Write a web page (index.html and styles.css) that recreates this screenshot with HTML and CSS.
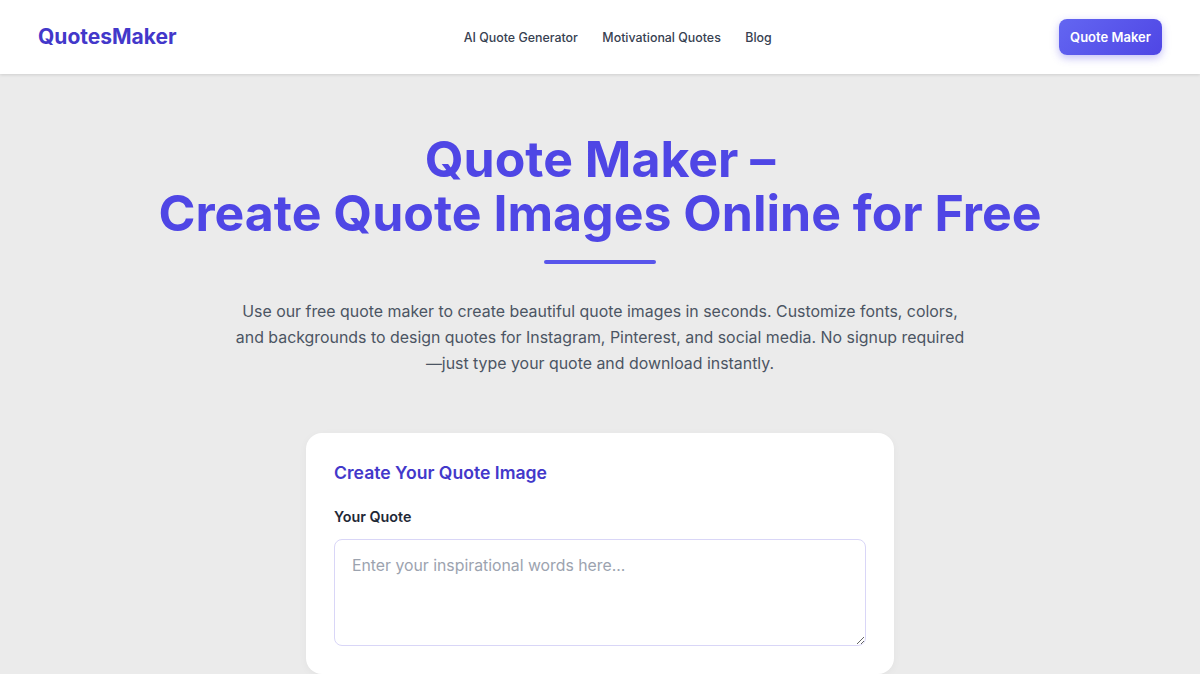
FILE: index.html
```html
<!DOCTYPE html>
<html lang="en">
<head>
<meta charset="utf-8">
<title>Quote Maker</title>
<link rel="stylesheet" href="styles.css">
</head>
<body>
<header class="site-header">
  <a class="logo" href="#">QuotesMaker</a>
  <nav class="nav">
    <a href="#">AI Quote Generator</a>
    <a href="#">Motivational Quotes</a>
    <a href="#">Blog</a>
  </nav>
  <a class="cta" href="#">Quote Maker</a>
</header>
<main class="main">
  <section class="hero">
    <h1 class="title">Quote Maker –<br>Create Quote Images Online for Free</h1>
    <div class="divider"></div>
    <p class="intro">Use our free quote maker to create beautiful quote images in seconds. Customize fonts, colors, and backgrounds to design quotes for Instagram, Pinterest, and social media. No signup required—just type your quote and download instantly.</p>
  </section>
  <section class="card">
    <h2 class="card-title">Create Your Quote Image</h2>
    <label class="label" for="q">Your Quote</label>
    <textarea id="q" class="input" placeholder="Enter your inspirational words here..."></textarea>
  </section>
</main>
</body>
</html>
```
FILE: styles.css
```css
* { box-sizing: border-box; }
html, body { margin: 0; padding: 0; }
body {
  font-family: Inter, "Noto Sans", "DejaVu Sans", sans-serif;
  background: #ebebeb;
  color: #1f2937;
  overflow: hidden;
}
a { text-decoration: none; }
.site-header {
  height: 74px;
  background: #ffffff;
  display: flex;
  align-items: center;
  justify-content: space-between;
  padding: 0 38px;
  box-shadow: 0 1px 3px rgba(0,0,0,0.12);
  position: relative;
  z-index: 1;
}
.logo {
  font-size: 21px;
  line-height: 24px;
  margin-top: -1px;
  font-weight: 700;
  color: #4338ca;
}
.nav {
  display: flex;
  gap: 24.5px;
}
.nav a {
  font-size: 12.4px;
  font-weight: 500;
  color: #374151;
}
.cta {
  width: 103px;
  height: 36px;
  display: flex;
  align-items: center;
  justify-content: center;
  border-radius: 8px;
  background: linear-gradient(135deg, #6366f1, #4f46e5);
  color: #ffffff;
  font-size: 13px;
  font-weight: 600;
  box-shadow: 0 3px 8px rgba(79,70,229,0.35);
}
.main {
  display: flex;
  flex-direction: column;
  align-items: center;
  padding-top: 58px;
}
.hero {
  display: flex;
  flex-direction: column;
  align-items: center;
  text-align: center;
}
.title {
  margin: 0;
  font-size: 50px;
  line-height: 54px;
  font-weight: 700;
  color: #4f46e5;
}
.divider {
  width: 112px;
  height: 3.5px;
  background: #5855eb;
  border-radius: 2px;
  margin-top: 20px;
}
.intro {
  margin: 35px 0 0;
  max-width: 738px;
  font-size: 15.9px;
  line-height: 26px;
  color: #4b5563;
}
.card {
  margin-top: 56px;
  width: 588px;
  background: #ffffff;
  border-radius: 16px;
  padding: 28px 28px 28px;
  display: flex;
  flex-direction: column;
  box-shadow: 0 2px 8px rgba(0,0,0,0.04);
}
.card-title {
  margin: 0;
  font-size: 17.6px;
  font-weight: 600;
  color: #4338ca;
  line-height: 24px;
}
.label {
  margin-top: 23px;
  font-size: 14.3px;
  line-height: 18px;
  font-weight: 600;
  color: #1f2937;
}
.input {
  margin-top: 13px;
  width: 532px;
  height: 107px;
  border: 1px solid #d9d6f7;
  border-radius: 8px;
  padding: 16px 17px;
  font-family: inherit;
  font-size: 15.8px;
  color: #1f2937;
  background: #ffffff;
}
.input::placeholder { color: #9ca3af; }
```
